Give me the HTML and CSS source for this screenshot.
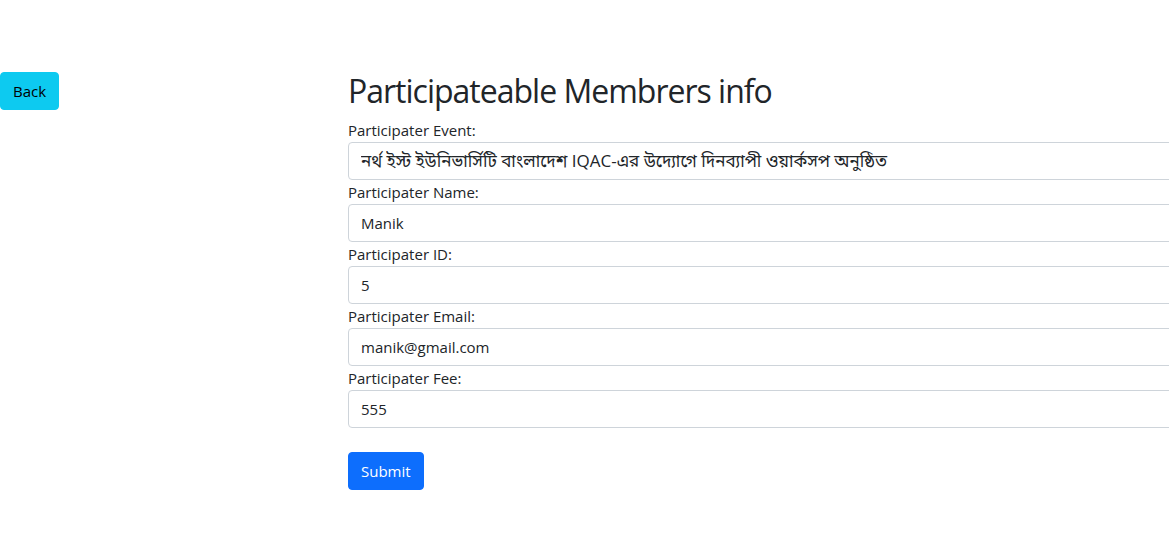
FILE: index.html
```html
<!DOCTYPE html>
<html lang="en">
<head>
<meta charset="utf-8">
<title>Participateable Membrers info</title>
<link rel="stylesheet" href="styles.css">
</head>
<body>
<div class="page">
  <div class="side">
    <a class="btn btn-back" href="#">Back</a>
  </div>
  <main class="main">
    <h2 class="title">Participateable Membrers info</h2>
    <form class="form">
      <label class="label">Participater Event:</label>
      <input class="input input-bn" type="text" value="নর্থ ইস্ট ইউনিভার্সিটি বাংলাদেশ IQAC-এর উদ্যোগে দিনব্যাপী ওয়ার্কসপ অনুষ্ঠিত">
      <label class="label">Participater Name:</label>
      <input class="input" type="text" value="Manik">
      <label class="label">Participater ID:</label>
      <input class="input" type="text" value="5">
      <label class="label">Participater Email:</label>
      <input class="input" type="text" value="manik@gmail.com">
      <label class="label">Participater Fee:</label>
      <input class="input" type="text" value="555">
      <div class="actions">
        <button class="btn btn-submit" type="button">Submit</button>
      </div>
    </form>
  </main>
</div>
</body>
</html>
```
FILE: styles.css
```css
html, body {
  margin: 0;
  padding: 0;
  background: #fff;
  overflow: hidden;
}
body {
  font-family: "Open Sans", "Noto Sans", "Noto Sans Bengali", sans-serif;
  font-size: 16px;
  line-height: 1.5;
  color: #212529;
}
.page {
  display: flex;
  padding-top: 72px;
}
.side {
  width: 348px;
  flex: none;
}
.main {
  flex: 1;
  min-width: 0;
}
.btn {
  display: inline-block;
  font-family: inherit;
  font-size: 15px;
  line-height: 24px;
  padding: 6px 12px;
  border: 1px solid transparent;
  border-radius: 4px;
  text-decoration: none;
  cursor: pointer;
  box-sizing: border-box;
  height: 38px;
}
.btn-back {
  background: #0dcaf0;
  border-color: #0dcaf0;
  color: #000;
}
.btn-submit {
  background: #0d6efd;
  border-color: #0d6efd;
  color: #fff;
}
.title {
  margin: 0 0 8px;
  font-size: 32px;
  font-weight: 400;
  line-height: 38px;
  letter-spacing: -1px;
}
.form {
  display: flex;
  flex-direction: column;
}
.label {
  display: block;
  font-size: 15px;
  line-height: 24px;
}
.input {
  display: block;
  box-sizing: border-box;
  width: calc(100% + 6px);
  height: 38px;
  padding: 6px 12px;
  font-family: inherit;
  font-size: 15px;
  line-height: 24px;
  color: #212529;
  background: #fff;
  border: 1px solid #ced4da;
  border-radius: 4px;
  margin: 0;
}
.input-bn {
  font-size: 17px;
}
.actions {
  padding-top: 24px;
}
```
